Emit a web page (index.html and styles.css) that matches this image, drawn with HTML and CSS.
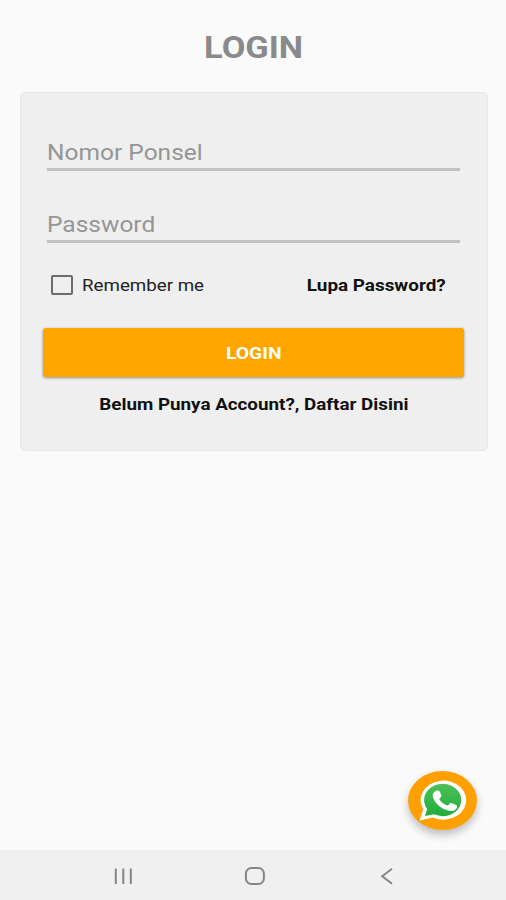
FILE: index.html
```html
<!DOCTYPE html>
<html lang="id">
<head>
<meta charset="utf-8">
<title>Login</title>
<link rel="stylesheet" href="styles.css">
</head>
<body>
<main class="screen">
  <h1 class="title"><span class="wide">LOGIN</span></h1>
  <form class="card">
    <div class="field"><span class="wide">Nomor Ponsel</span></div>
    <div class="field field-password"><span class="wide">Password</span></div>
    <div class="options">
      <span class="checkbox"></span>
      <span class="wide remember">Remember me</span>
      <span class="wide forgot">Lupa Password?</span>
    </div>
    <div class="submit"><span class="wide">LOGIN</span></div>
    <div class="register"><span class="wide">Belum Punya Account?, Daftar Disini</span></div>
  </form>
</main>
<div class="fab">
  <svg width="48" height="42" viewBox="0 0 48 42">
    <defs><linearGradient id="green" x1="0" y1="0" x2="0" y2="1"><stop offset="0" stop-color="#4dc05a"/><stop offset="1" stop-color="#20ad3c"/></linearGradient></defs>
    <path d="M.6 40.4 4.2 29.2A22.8 19.5 0 1 1 13.8 37.4Z" fill="#fff"/>
    <path d="M6 36 8.2 28.9A18.6 16.2 0 1 1 15.1 34.3Z" fill="url(#green)"/>
    <path d="M17 10.8C19 10 20.4 10.6 21 12L22.4 15.5C22.8 17 20.8 18 20.2 19.2C22 22.2 24.9 24.4 28.6 25.6C30 24.7 30.8 22.5 32.4 23L37.2 25C38.8 25.9 38 28.4 36.4 29.7C34 31.5 30.6 31.2 27.6 30.1C21.5 28 17 23.7 14.6 18.9C12.8 15.2 14 12.3 17 10.8Z" fill="#fff"/>
  </svg>
</div>
<nav class="navbar">
  <svg class="nav-icon" width="20" height="20" viewBox="0 0 20 20"><path d="M2.8 2.4V18M10.3 2.4V18M17.8 2.4V18"/></svg>
  <svg class="nav-icon nav-home" width="22" height="20" viewBox="0 0 22 20"><rect x="1.9" y="2" width="18" height="16" rx="5.5"/></svg>
  <svg class="nav-icon" width="14" height="20" viewBox="0 0 14 20"><path d="M12 2.8 2.2 10.2 12 17.7"/></svg>
</nav>
</body>
</html>
```
FILE: styles.css
```css
* { box-sizing: border-box; }
body {
  margin: 0;
  height: 900px;
  display: flex;
  flex-direction: column;
  background: #fafafa;
  font-family: Roboto, sans-serif;
  color: #111;
  overflow: hidden;
}
.screen { flex: 1; padding: 28px 18px 0 20px; }
.wide {
  display: inline-block;
  white-space: nowrap;
  transform: scaleX(1.17);
}
.title {
  margin: 0;
  height: 64px;
  font-size: 31px;
  line-height: 39px;
  font-weight: 700;
  text-align: center;
  color: #8a8a8a;
}
.title .wide { transform: scaleX(1.11); }
.card {
  height: 359px;
  padding: 42px 23px 0 22px;
  border: 1px solid #e7e7e7;
  border-radius: 5px;
  background: #efefef;
}
.field {
  height: 36px;
  margin: 0 4px;
  border-bottom: 3px solid #c2c2c2;
  font-size: 21.5px;
  line-height: 36px;
  color: #959595;
}
.field .wide { transform: scaleX(1.14); }
.field .wide, .options .wide { transform-origin: left; }
.field-password { margin-top: 36px; }
.options {
  display: flex;
  align-items: center;
  height: 34px;
  margin: 25px 0 26px 8px;
  font-size: 16px;
}
.checkbox {
  width: 22px;
  height: 20px;
  border: 2px solid #6c6c6c;
  border-radius: 2px;
}
.remember { margin-left: 9px; color: #222; }
.forgot { margin-left: auto; font-weight: 700; }
.options .forgot {
  margin-right: 18px;
  transform: scaleX(1.18);
  transform-origin: right;
}
.submit {
  height: 49px;
  border-radius: 3px;
  background: #ffa500;
  box-shadow: 0 1px 3px rgba(0, 0, 0, .4);
  color: #fff;
  font-size: 16.5px;
  font-weight: 700;
  line-height: 51px;
  text-align: center;
}
.register {
  margin-top: 18px;
  font-size: 16.3px;
  font-weight: 700;
  line-height: 20px;
  text-align: center;
}
.register .wide { transform: scaleX(1.155); }
.fab {
  position: absolute;
  left: 408px;
  top: 771px;
  width: 69px;
  height: 59px;
  padding: 9px 0 0 11px;
  border-radius: 50%;
  background: #ffa000;
  box-shadow: 0 5px 8px rgba(0, 0, 0, .24);
}
.fab svg { display: block; }
.navbar {
  display: flex;
  align-items: center;
  justify-content: space-between;
  height: 50px;
  padding: 2px 112px 0 113px;
  background: #f0f0f0;
}
.nav-icon {
  fill: none;
  stroke: #858585;
  stroke-width: 2;
}
.nav-home { margin-right: 4px; }
```
